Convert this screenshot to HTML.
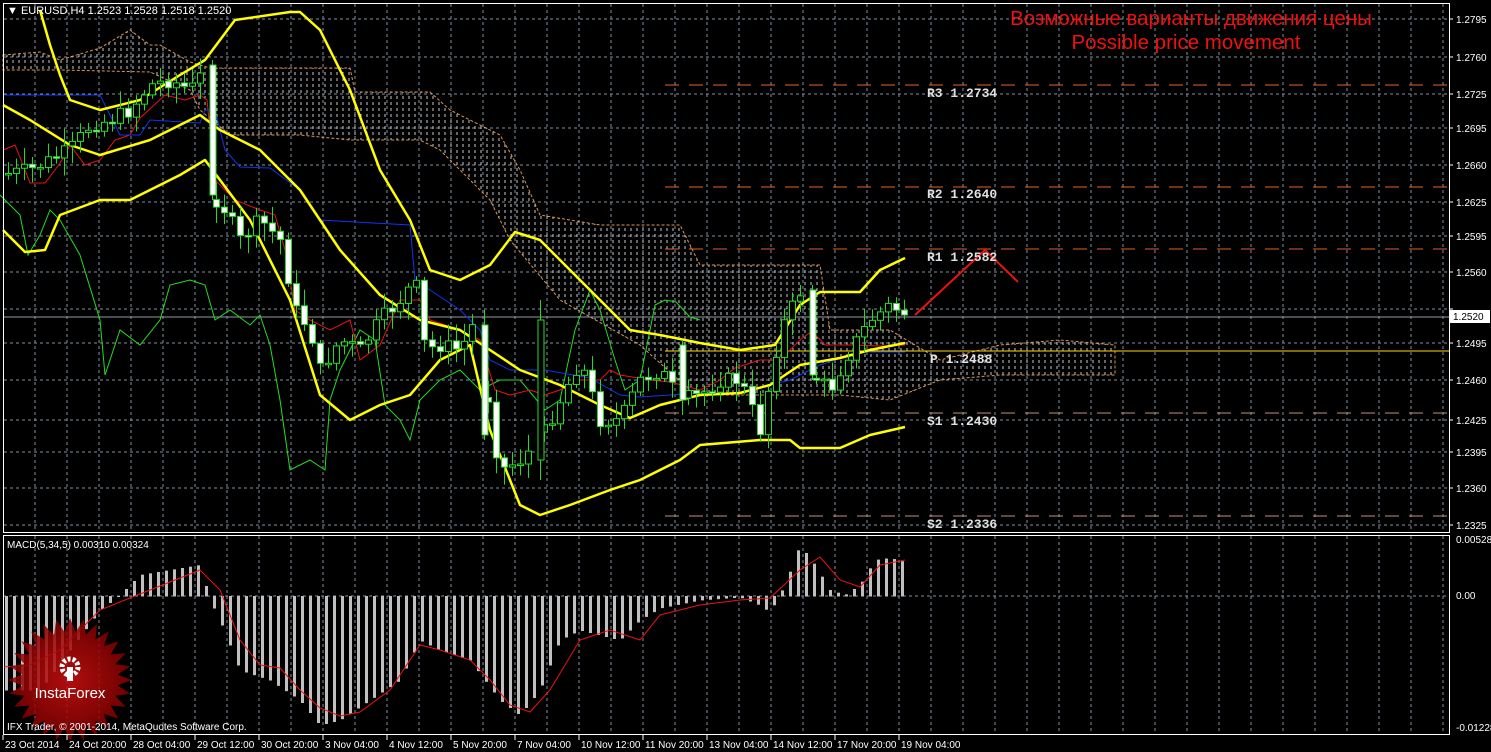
<!DOCTYPE html>
<html><head><meta charset="utf-8"><style>
html,body{margin:0;padding:0;background:#000;width:1491px;height:752px;overflow:hidden}
svg{display:block}
text{font-family:"Liberation Sans",sans-serif}
</style></head><body>
<svg id="s" width="1491" height="752" xmlns="http://www.w3.org/2000/svg">
<defs>
<pattern id="hatch" width="6" height="6" patternUnits="userSpaceOnUse">
<line x1="1" y1="0" x2="1" y2="3" stroke="#ddd" stroke-width="1"/>
</pattern>
<radialGradient id="rg" cx="0.5" cy="0.5" r="0.5">
<stop offset="0" stop-color="#d01010"/><stop offset="1" stop-color="#800000"/>
</radialGradient>
</defs>
<rect width="1491" height="752" fill="#000"/>
<g id="grid" stroke="#8090a0" stroke-dasharray="3,3" stroke-width="1"></g>
<g fill="url(#hatch)" stroke="#f4a460" stroke-dasharray="3,2" stroke-width="1" opacity="0.9">
<polygon points="3,55 40,52 60,60 100,48 130,30 150,45 160,45 190,62 210,68 350,68 355,92 430,92 450,110 500,135 520,170 540,215 600,225 680,225 700,265 820,265 830,330 890,330 940,360 1000,345 1060,340 1115,345 1115,375 1000,375 940,380 890,400 840,395 780,395 720,395 690,390 640,345 560,300 510,240 490,200 440,150 420,140 350,140 300,135 260,135 230,135 200,110 190,90 150,72 60,70 3,70"/>
</g>
<g stroke-width="1">
<line x1="665" y1="85" x2="1449" y2="85" stroke="#e8602c" stroke-dasharray="14,10"/>
<line x1="665" y1="187" x2="1449" y2="187" stroke="#e8602c" stroke-dasharray="14,10"/>
<line x1="665" y1="249" x2="1449" y2="249" stroke="#e8602c" stroke-dasharray="14,10"/>
<line x1="665" y1="351" x2="1449" y2="351" stroke="#ffd700"/>
<line x1="665" y1="413" x2="1449" y2="413" stroke="#c09080" stroke-dasharray="14,10"/>
<line x1="665" y1="516" x2="1449" y2="516" stroke="#c09080" stroke-dasharray="14,10"/>
<line x1="3" y1="317" x2="1449" y2="317" stroke="#909aa8"/>
</g>
<polyline fill="none" stroke="#22dd22" stroke-width="1" points="0,195 20,215 28,255 40,235 50,210 60,220 80,255 100,320 105,375 120,330 140,345 160,320 170,285 190,280 205,285 215,320 230,310 250,325 260,315 270,345 280,400 290,470 310,460 325,470 330,400 340,370 360,330 375,340 385,405 400,420 410,440 420,400 440,380 460,370 480,390 500,380 520,380 545,410 560,400 575,330 590,290 600,310 615,360 625,390 640,380 655,305 665,300 676,302 690,317 700,320"/>
<polyline fill="none" stroke="#ee1111" stroke-width="1" points="3,150 15,145 25,170 30,183 45,183 55,170 62,160 70,145 85,165 100,160 115,140 130,135 140,118 165,95 185,100 200,95 207,100 215,180 235,200 260,210 275,215 285,250 295,310 310,320 330,330 350,320 360,360 380,345 400,300 420,300 430,320 460,330 480,340 495,390 510,395 530,390 545,395 560,390 580,380 600,380 610,370 620,375 650,380 670,382 700,390 720,380 735,368 760,360 780,360 800,340 812,331 825,345 850,345 880,346 905,345"/>
<polyline fill="none" stroke="#1133ee" stroke-width="1" points="3,95 100,95 110,115 120,135 140,135 150,120 200,123 205,110 215,110 225,150 240,167 270,168 300,190 320,220 410,225 415,280 430,290 460,310 480,330 490,360 510,370 545,370 590,378 620,395 640,397 700,393 740,393 790,380 820,365 860,352 905,352"/>
<g fill="none" stroke="#ffff00" stroke-width="2.5" stroke-linejoin="round">
<polyline points="40,10 50,45 60,75 70,100 100,110 140,100 180,75 205,60 235,20 290,12 300,12 320,30 350,90 380,170 410,220 430,270 460,280 490,265 515,232 540,240 570,270 600,300 630,330 660,335 700,343 740,350 775,345 800,305 820,292 860,292 880,270 905,258"/>
<polyline points="3,105 30,120 70,145 100,155 150,140 200,115 220,130 260,150 300,190 340,250 380,295 420,320 460,330 490,350 520,370 560,385 600,405 630,418 660,405 700,395 740,393 770,385 800,365 840,358 870,350 905,343"/>
<polyline points="3,230 25,252 45,250 60,215 100,200 130,200 180,175 205,160 220,180 250,220 290,300 320,395 350,420 380,405 410,395 440,360 470,345 490,430 520,505 540,515 570,505 610,490 640,480 680,460 700,445 760,440 790,440 800,448 840,448 870,435 905,427"/>
</g>
<g id="candles"></g>
<g stroke="#22dd22" stroke-width="1">
<line x1="212.5" y1="60" x2="212.5" y2="200"/><rect x="210" y="65" width="6" height="130" fill="#fff"/>
<line x1="484.5" y1="310" x2="484.5" y2="440"/><rect x="482" y="325" width="6" height="110" fill="#fff"/>
<line x1="540.5" y1="300" x2="540.5" y2="480"/><rect x="538" y="320" width="6" height="140" fill="#000"/>
<line x1="812.5" y1="285" x2="812.5" y2="380"/><rect x="810" y="290" width="6" height="85" fill="#fff"/>
<line x1="682.5" y1="340" x2="682.5" y2="415"/><rect x="680" y="345" width="6" height="55" fill="#fff"/>
</g>
<polyline points="915,315 985,250 1018,282" fill="none" stroke="#ee1111" stroke-width="2"/>
<g fill="#e0e0e0" font-size="13" font-weight="bold">
<text x="927" y="97" style="font-family:'Liberation Mono',monospace">R3 1.2734</text>
<text x="927" y="198" style="font-family:'Liberation Mono',monospace">R2 1.2640</text>
<text x="927" y="261" style="font-family:'Liberation Mono',monospace">R1 1.2582</text>
<text x="930" y="363" style="font-family:'Liberation Mono',monospace">P 1.2488</text>
<text x="927" y="425" style="font-family:'Liberation Mono',monospace">S1 1.2430</text>
<text x="927" y="528" style="font-family:'Liberation Mono',monospace">S2 1.2336</text>
</g>
<text x="1191" y="25" fill="#ee1111" font-size="20.5" text-anchor="middle">Возможные варианты движения цены</text>
<text x="1186" y="49" fill="#ee1111" font-size="20.5" text-anchor="middle">Possible price movement</text>
<line x1="3" y1="596" x2="1449" y2="596" stroke="#8090a0" stroke-dasharray="3,3"/>
<g id="macd"></g>
<polyline fill="none" stroke="#ee1111" stroke-width="1" points="3,667 30,665 60,650 100,610 150,590 200,570 220,590 240,640 260,665 280,668 300,690 320,708 340,716 360,712 390,690 420,645 440,650 470,660 490,680 510,705 530,712 550,690 580,640 610,630 640,640 660,615 700,605 740,600 770,598 800,570 820,557 840,580 860,587 880,565 905,560"/>
<g opacity="0.85">
<polygon id="star" fill="url(#rg)"/>
</g>
<g fill="#fff">
<circle cx="70" cy="667" r="8" fill="none" stroke="#fff" stroke-width="5" stroke-dasharray="3,2"/>
<rect x="67" y="667" width="6" height="14"/>
</g>
<text x="70" y="698" fill="#fff" font-size="15" text-anchor="middle">InstaForex</text>
<g stroke="#fff" stroke-width="1" fill="none">
<rect x="3.5" y="3.5" width="1446" height="529"/>
<rect x="3.5" y="535.5" width="1446" height="199"/>
</g>
<text x="7" y="14" fill="#fff" font-size="11">▼ EURUSD,H4  1.2523 1.2528 1.2518 1.2520</text>
<text x="7" y="548" fill="#fff" font-size="10">MACD(5,34,5) 0.00310 0.00324</text>
<text x="7" y="730" fill="#fff" font-size="10">IFX Trader, © 2001-2014, MetaQuotes Software Corp.</text>
<g id="axis" fill="#fff" font-size="10"></g>
<rect x="1450" y="310" width="40" height="13" fill="#fff"/>
<text x="1453" y="320" fill="#000" font-size="10">1.2520</text>
</svg>
<script>
(function(){
var NS="http://www.w3.org/2000/svg";
function el(p,t,a,txt){var e=document.createElementNS(NS,t);for(var k in a)e.setAttribute(k,a[k]);if(txt)e.textContent=txt;p.appendChild(e);return e;}
var g=document.getElementById('grid');
for(var x=35;x<1449;x+=32){el(g,'line',{x1:x,y1:4,x2:x,y2:532});el(g,'line',{x1:x,y1:536,x2:x,y2:734});}
var lv=[["1.2795",19],["1.2760",57],["1.2725",94],["1.2695",128],["1.2660",165],["1.2625",202],["1.2595",236],["1.2560",272],["1.2525",309],["1.2495",343],["1.2460",380],["1.2425",420],["1.2395",452],["1.2360",488],["1.2325",525]];
var ax=document.getElementById('axis');
lv.forEach(function(l){el(g,'line',{x1:4,y1:l[1],x2:1449,y2:l[1]});el(ax,'line',{x1:1449,y1:l[1],x2:1453,y2:l[1],stroke:'#fff'});if(l[0]!="1.2525")el(ax,'text',{x:1456,y:l[1]+4},l[0]);});
[["0.00528",543],["0.00",599],["-0.01228",731]].forEach(function(l){el(ax,'text',{x:1456,y:l[1]},l[0]);});
var tl=["23 Oct 2014","24 Oct 20:00","28 Oct 04:00","29 Oct 12:00","30 Oct 20:00","3 Nov 04:00","4 Nov 12:00","5 Nov 20:00","7 Nov 04:00","10 Nov 12:00","11 Nov 20:00","13 Nov 04:00","14 Nov 12:00","17 Nov 20:00","19 Nov 04:00"];
tl.forEach(function(t,i){var x=3+i*64;el(ax,'line',{x1:x,y1:735,x2:x,y2:740,stroke:'#fff'});el(ax,'text',{x:x+2,y:748},t);});
function interp(pts,x){for(var i=1;i<pts.length;i++){if(x<=pts[i][0]){var a=pts[i-1],b=pts[i];return a[1]+(b[1]-a[1])*(x-a[0])/(b[0]-a[0]);}}return pts[pts.length-1][1];}
var cp=[[0,175],[30,170],[50,160],[70,150],[90,125],[110,120],[130,110],[150,85],[170,80],[190,90],[205,70],[212,195],[225,210],[240,240],[260,220],[280,240],[295,310],[310,330],[320,370],[340,340],[360,350],[380,320],[400,300],[415,280],[425,350],[440,345],[460,350],[475,320],[482,330],[490,420],[500,470],[520,460],[540,440],[560,400],[580,360],[600,420],[620,420],[640,380],[660,370],[680,400],[700,395],[720,380],[740,380],[760,430],[780,330],[800,292],[812,375],[830,390],[850,350],[870,320],[890,305],[905,315]];
var c=document.getElementById('candles'),prev=175,seed=7;function rnd(){seed=(seed*9301+49297)%233280;return seed/233280;}
for(var x=8;x<=905;x+=8){if(x==208||x==480||x==536||x==808||x==680){prev=interp(cp,x+8);continue;}var cl=interp(cp,x)+(rnd()-0.5)*16;if(x==904)cl=315;var o=prev,tp=Math.min(o,cl),bt=Math.max(o,cl);
el(c,'line',{x1:x+0.5,y1:tp-3-rnd()*15,x2:x+0.5,y2:bt+3+rnd()*15,stroke:'#22dd22'});
el(c,'rect',{x:x-2.5,y:tp,width:6,height:Math.max(bt-tp,1.5),fill:cl>o?'#fff':'#000',stroke:'#22dd22','stroke-width':1});prev=cl;}
var mp=[[5,690],[40,690],[70,650],[100,610],[120,595],[140,575],[170,570],[200,565],[210,600],[220,620],[240,670],[270,680],[300,700],[320,725],[340,720],[370,700],[400,680],[420,640],[440,650],[470,660],[500,700],[520,715],[540,690],[560,640],[580,630],[600,635],[620,640],[640,620],[660,608],[700,600],[740,597],[760,605],[770,612],[785,585],[800,545],[815,565],[830,590],[845,595],[860,585],[875,560],[890,558],[905,562]];
var m=document.getElementById('macd');
for(var x=6;x<=906;x+=8){var y=interp(mp,x);el(m,'rect',{x:x-1,y:Math.min(y,596),width:3,height:Math.abs(y-596)+0.5,fill:'#c0c0c0'});}
var pts=[],cx=70,cy=680;for(var i=0;i<56;i++){var a=i*Math.PI/28,r=i%2?48:62;pts.push((cx+r*Math.cos(a)).toFixed(1)+","+(cy+r*Math.sin(a)).toFixed(1));}
document.getElementById('star').setAttribute('points',pts.join(' '));
})();
</script>
</body></html>
